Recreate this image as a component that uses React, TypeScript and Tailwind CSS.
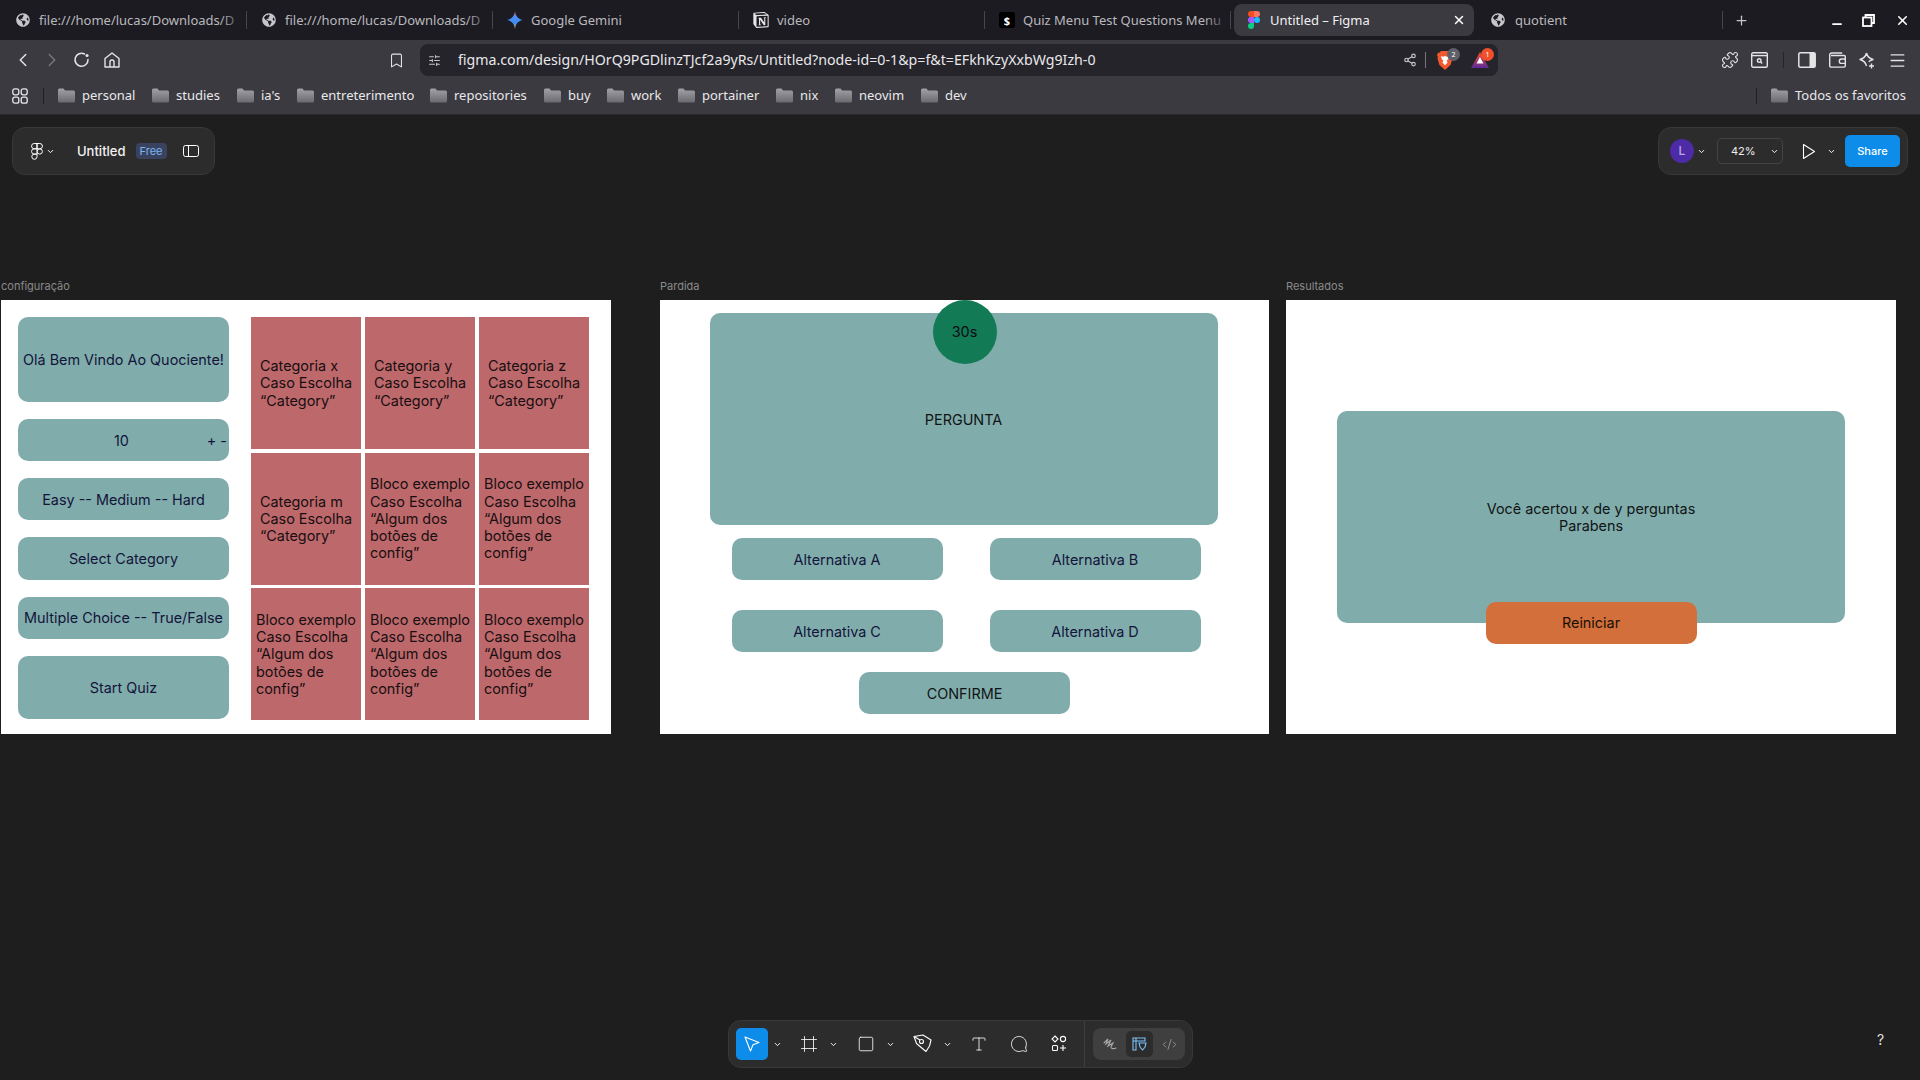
import React from 'react';
import {
  ChevronLeft,
  ChevronRight,
  Bookmark,
  SlidersHorizontal,
  Share2,
  Puzzle,
  Menu,
  Plus,
  X,
  Minus,
  ChevronDown,
  Frame,
  Square,
  Type,
  MessageCircle,
  Code2,
} from 'lucide-react';
import { FaGlobeAmericas } from 'react-icons/fa';
import { SiNotion } from 'react-icons/si';

const FONT_UI = "font-['Noto_Sans',sans-serif]";
const FONT_FIGMA = "font-['Inter',sans-serif]";

const FigmaColor = () => (
  <svg width="12" height="18" viewBox="0 0 12 18">
    <path d="M0 3a3 3 0 0 1 3-3h3v6H3a3 3 0 0 1-3-3z" fill="#f24e1e" />
    <path d="M6 0h3a3 3 0 0 1 0 6H6z" fill="#ff7262" />
    <path d="M0 9a3 3 0 0 1 3-3h3v6H3a3 3 0 0 1-3-3z" fill="#a259ff" />
    <circle cx="9" cy="9" r="3" fill="#1abcfe" />
    <path d="M0 15a3 3 0 0 1 3-3h3v3a3 3 0 0 1-6 0z" fill="#0acf83" />
  </svg>
);

const Gemini = () => (
  <svg width="16" height="18" viewBox="0 0 16 18">
    <defs>
      <linearGradient id="gem" x1="0" y1="0" x2="0" y2="1">
        <stop offset="0" stopColor="#ea5a35" />
        <stop offset="0.3" stopColor="#4f8df5" />
        <stop offset="0.7" stopColor="#3f8cf0" />
        <stop offset="1" stopColor="#f5c23a" />
      </linearGradient>
    </defs>
    <path d="M8 0c.5 5 3.6 8.4 8 9-4.4.6-7.5 4-8 9-.5-5-3.6-8.4-8-9 4.4-.6 7.5-4 8-9z" fill="url(#gem)" />
  </svg>
);

const Folder = () => (
  <svg width="17" height="15" viewBox="0 0 17 15">
    <defs>
      <linearGradient id="fld" x1="0" y1="0" x2="0" y2="1">
        <stop offset="0" stopColor="#a2a2a6" />
        <stop offset="1" stopColor="#6a6a6f" />
      </linearGradient>
    </defs>
    <path d="M0 2a1.5 1.5 0 0 1 1.5-1.5h4L7 2.5h8.5A1.5 1.5 0 0 1 17 4v9a1.5 1.5 0 0 1-1.5 1.5h-14A1.5 1.5 0 0 1 0 13z" fill="url(#fld)" />
  </svg>
);

const BraveLion = () => (
  <svg width="16" height="19" viewBox="0 0 16 19">
    <path d="M4 0h8l1.3 1.6 1.9.4.8 2.2-.9 1.6.5 1.2-2 6.8-3.4 3.2L8 19l-2.2-1.9-3.4-3.2-2-6.8.5-1.2L0 4.2.8 2l1.9-.4z" fill="#f1582b" />
    <path d="M4 5l2.2.8L8 5l1.8.8L12 5l-.8 3.2-1.6 1.2 1 2.2L8 14.2l-2.6-2.6 1-2.2-1.6-1.2z" fill="#fff" />
  </svg>
);

const RewardsTriangle = () => (
  <svg width="18" height="16" viewBox="0 0 18 16">
    <defs>
      <linearGradient id="rw" x1="0" y1="0" x2="0" y2="1">
        <stop offset="0" stopColor="#f1502b" />
        <stop offset="0.55" stopColor="#a23a6a" />
        <stop offset="1" stopColor="#5b2a9a" />
      </linearGradient>
    </defs>
    <path d="M9 0l9 16H0z" fill="url(#rw)" />
    <path d="M9 5l3.4 6.4H5.6z" fill="#fff" />
  </svg>
);

const FigmaMark = () => (
  <svg width="12" height="17" viewBox="0 0 12 17" fill="none" stroke="#fff" strokeWidth="1">
    <path d="M6 .5H3.2a2.6 2.6 0 0 0 0 5.3H6zM6 .5h2.8a2.6 2.6 0 0 1 0 5.3H6zM6 5.8H3.2a2.6 2.6 0 0 0 0 5.3H6zM6 11.1H3.2a2.6 2.6 0 1 0 2.8 2.6z" />
    <circle cx="8.8" cy="8.5" r="2.6" />
  </svg>
);

const Caret = ({ className = '' }: { className?: string }) => (
  <ChevronDown className={`w-[9px] h-[9px] text-white ${className}`} strokeWidth={2.5} />
);

const ReloadIcon = () => (
  <svg className="ml-[10px]" width="18" height="18" viewBox="0 0 18 18" fill="none" stroke="#e4e4e6" strokeWidth="1.5" strokeLinecap="round">
    <path d="M15 8.5A6.5 6.5 0 1 1 11.5 3" />
    <circle cx="14" cy="4.5" r="1.6" fill="#e4e4e6" stroke="none" />
  </svg>
);

const HomeIcon = () => (
  <svg className="ml-[12px]" width="18" height="18" viewBox="0 0 18 18" fill="none" stroke="#e4e4e6" strokeWidth="1.4" strokeLinejoin="round">
    <path d="M2 7.5L9 2l7 5.5V16H2z" />
    <path d="M7 16v-5a2 2 0 0 1 4 0v5" />
  </svg>
);

const AppsIcon = () => (
  <svg width="16" height="16" viewBox="0 0 16 16" fill="none" stroke="#e8e8ea" strokeWidth="1.3">
    <rect x="0.8" y="0.8" width="6" height="6" rx="2" />
    <rect x="9.2" y="0.8" width="6" height="6" rx="2" />
    <rect x="0.8" y="9.2" width="6" height="6" rx="2" />
    <rect x="9.2" y="9.2" width="6" height="6" rx="2" />
  </svg>
);

const tabs = [
  { label: 'file:///home/lucas/Downloads/D', icon: <FaGlobeAmericas className="w-[14px] h-[14px] text-[#c6c6ca]" /> },
  { label: 'file:///home/lucas/Downloads/D', icon: <FaGlobeAmericas className="w-[14px] h-[14px] text-[#c6c6ca]" /> },
  { label: 'Google Gemini', icon: <Gemini /> },
  { label: 'video', icon: <SiNotion className="w-[16px] h-[16px] text-[#e6e6e6]" /> },
  {
    label: 'Quiz Menu Test Questions Menu',
    icon: (
      <span className="w-[16px] h-[16px] rounded-[2px] bg-black text-white text-[11px] leading-none flex items-center justify-center font-bold">$</span>
    ),
  },
];

const bookmarks = [
  { label: 'personal', w: 'w-[94px]' },
  { label: 'studies', w: 'w-[85px]' },
  { label: 'ia\'s', w: 'w-[60px]' },
  { label: 'entreterimento', w: 'w-[133px]' },
  { label: 'repositories', w: 'w-[114px]' },
  { label: 'buy', w: 'w-[63px]' },
  { label: 'work', w: 'w-[71px]' },
  { label: 'portainer', w: 'w-[98px]' },
  { label: 'nix', w: 'w-[59px]' },
  { label: 'neovim', w: 'w-[86px]' },
  { label: 'dev', w: 'w-[60px]' },
];

const Tab = ({ label, icon }: { label: string; icon: React.ReactNode }) => (
  <div className="w-[246px] h-[32px] shrink-0 flex items-center pl-[14px] relative">
    <span className="w-[16px] flex justify-center shrink-0">{icon}</span>
    <span className="ml-[8px] mt-[1px] w-[198px] text-[13px] text-[#b9b9bd] whitespace-nowrap">{label}</span>
    <span className="absolute right-[1px] top-[4px] w-[26px] h-[24px] bg-gradient-to-r from-transparent to-[#1c1b22]" />
    <span className="absolute right-0 top-[7px] w-px h-[18px] bg-[#46454b]" />
  </div>
);

const TealBox = ({ className = '', children }: { className?: string; children?: React.ReactNode }) => (
  <div className={`bg-[#80adac] flex items-center justify-center text-[14.4px] text-[#14143a] ${className}`}>{children}</div>
);

const cellTexts = [
  'Categoria x\nCaso Escolha\n“Category”',
  'Categoria y\nCaso Escolha\n“Category”',
  'Categoria z\nCaso Escolha\n“Category”',
  'Categoria m\nCaso Escolha\n“Category”',
  ...Array(5).fill('Bloco exemplo\nCaso Escolha\n“Algum dos\nbotões de\nconfig”'),
];

const ConfigFrame = () => (
  <div className="w-[610px] h-[434px] bg-white flex pl-[17px] pt-[17px]">
    <div className="w-[211px] flex flex-col">
      <TealBox className="h-[85px] rounded-[10px] pt-[1px]">Olá Bem Vindo Ao Quociente!</TealBox>
      <div className="mt-[17px] h-[42px] rounded-[10px] bg-[#80adac] flex items-center justify-between pl-[96px] pr-[2px] pt-[1px] text-[14.4px] text-[#14143a]">
        <span>10</span>
        <span>+ -</span>
      </div>
      <TealBox className="mt-[17px] h-[42px] rounded-[10px] pt-[1px]">Easy -- Medium -- Hard</TealBox>
      <TealBox className="mt-[17px] h-[43px] rounded-[10px]">Select Category</TealBox>
      <TealBox className="mt-[17px] h-[42px] rounded-[10px]">Multiple Choice -- True/False</TealBox>
      <TealBox className="mt-[17px] h-[63px] rounded-[10px]">Start Quiz</TealBox>
    </div>
    <div className="ml-[22px] w-[338px] h-[403px] grid grid-cols-3 grid-rows-3 gap-x-[4px] gap-y-[3.5px]">
      {cellTexts.map((text, i) => (
        <div key={i} className="bg-[#bd686a] flex items-center justify-center">
          <span className="whitespace-pre text-left text-[14.4px] leading-[17.3px] text-[#180f12]">{text}</span>
        </div>
      ))}
    </div>
  </div>
);

const GameFrame = () => (
  <div className="w-[609px] h-[434px] bg-white relative flex flex-col items-center pt-[13px] pr-[2px]">
    <div className="absolute left-[272.5px] top-0 w-[64px] h-[64px] rounded-full bg-[#127a54] flex items-center justify-center text-[14.4px] text-[#0b0b14]">
      30s
    </div>
    <TealBox className="w-[508px] h-[212px] rounded-[10px] pt-[1px] text-[#111414] shrink-0">PERGUNTA</TealBox>
    <div className="mt-[13px] ml-[5px] grid grid-cols-2 gap-x-[47px] gap-y-[30px]">
      <TealBox className="w-[211px] h-[42px] rounded-[10px] pt-[1px]">Alternativa A</TealBox>
      <TealBox className="w-[211px] h-[42px] rounded-[10px] pt-[1px]">Alternativa B</TealBox>
      <TealBox className="w-[211px] h-[42px] rounded-[10px] pt-[1px]">Alternativa C</TealBox>
      <TealBox className="w-[211px] h-[42px] rounded-[10px] pt-[1px]">Alternativa D</TealBox>
    </div>
    <TealBox className="mt-[20px] ml-[2px] w-[211px] h-[42px] rounded-[10px] pt-[1px] text-[#111414]">CONFIRME</TealBox>
  </div>
);

const ResultFrame = () => (
  <div className="w-[610px] h-[434px] bg-white flex flex-col items-center pt-[111px]">
    <TealBox className="w-[508px] h-[212px] rounded-[10px] text-center leading-[17.3px] text-[#111414] shrink-0">
      Você acertou x de y perguntas
      <br />
      Parabens
    </TealBox>
    <div className="-mt-[21px] relative w-[211px] h-[42px] rounded-[10px] bg-[#d26f3a] flex items-center justify-center pb-[1px] text-[14.4px] text-[#1a0f08]">
      Reiniciar
    </div>
  </div>
);

export default function App() {
  return (
    <div className="w-[1920px] h-[1080px] overflow-hidden bg-[#1e1e1e] flex flex-col relative">
      {/* tab strip */}
      <div className={`h-[40px] bg-[#1c1b22] flex items-center pl-[1px] shrink-0 ${FONT_UI}`}>
        {tabs.map((t, i) => (
          <Tab key={i} label={t.label} icon={t.icon} />
        ))}
        <div className="w-[240px] h-[32px] ml-[3px] shrink-0 rounded-[8px] bg-[#3b3a41] flex items-center pl-[14px] relative">
          <FigmaColor />
          <span className="ml-[10px] mt-[1px] text-[13px] text-[#f0f0f2]">Untitled – Figma</span>
          <X className="absolute right-[8px] top-[9px] w-[14px] h-[14px] text-white" strokeWidth={2.5} />
        </div>
        <div className="w-[246px] h-[32px] ml-[3px] shrink-0 flex items-center pl-[14px] relative">
          <FaGlobeAmericas className="w-[14px] h-[14px] text-[#c6c6ca]" />
          <span className="ml-[10px] mt-[1px] text-[13px] text-[#b9b9bd]">quotient</span>
          <span className="absolute right-0 top-[7px] w-px h-[18px] bg-[#46454b]" />
        </div>
        <Plus className="ml-[11px] w-[15px] h-[15px] text-[#c6c6ca]" />
        <Minus className="ml-[81px] mt-[8px] w-[14px] h-[14px] text-white" strokeWidth={3} />
        <svg className="ml-[18px]" width="13" height="13" viewBox="0 0 13 13" fill="none" stroke="#fff" strokeWidth="1.8">
          <path d="M3.5 3V1h8.5v8H9.5" />
          <rect x="1" y="3.5" width="8.5" height="8.5" />
        </svg>
        <X className="ml-[20px] w-[15px] h-[15px] text-white" strokeWidth={2.5} />
      </div>

      {/* address bar */}
      <div className={`h-[40px] bg-[#3b3a41] flex items-center pl-[12px] shrink-0 ${FONT_UI}`}>
        <ChevronLeft className="w-[22px] h-[22px] text-[#e4e4e6]" strokeWidth={1.6} />
        <ChevronRight className="ml-[7px] w-[22px] h-[22px] text-[#77767c]" strokeWidth={1.6} />
        <ReloadIcon />
        <HomeIcon />
        <Bookmark className="ml-[267px] w-[17px] h-[19px] text-[#e4e4e6]" strokeWidth={1.5} />
        <div className="ml-[15px] w-[1078px] h-[32px] rounded-[8px] bg-[#25242a] flex items-center pl-[8px]">
          <SlidersHorizontal className="w-[13px] h-[13px] text-[#c6c6ca]" />
          <span className="ml-[17px] text-[14.2px] text-[#e8e8ea] whitespace-nowrap w-[945px]">
            figma.com/design/HOrQ9PGDlinzTJcf2a9yRs/Untitled?node-id=0-1&amp;p=f&amp;t=EFkhKzyXxbWg9Izh-0
          </span>
          <Share2 className="w-[14px] h-[14px] text-[#c6c6ca]" />
          <span className="ml-[8px] w-px h-[16px] bg-[#77767c]" />
          <div className="ml-[11px] relative">
            <BraveLion />
            <span className="absolute -right-[7px] -top-[3px] w-[13px] h-[13px] rounded-full bg-[#5f5f6a] text-[7px] leading-[13px] text-center text-white">2</span>
          </div>
          <div className="ml-[18px] relative">
            <RewardsTriangle />
            <span className="absolute -right-[5px] -top-[4px] w-[13px] h-[13px] rounded-full bg-[#f1502b] text-[7px] leading-[13px] text-center text-white">1</span>
          </div>
        </div>
        <Puzzle className="ml-[223px] w-[18px] h-[18px] text-[#e4e4e6]" strokeWidth={1.5} />
        <svg className="ml-[12px]" width="17" height="16" viewBox="0 0 17 16" fill="none" stroke="#e4e4e6" strokeWidth="1.4">
          <rect x="0.7" y="0.7" width="15.6" height="14.6" rx="1.5" />
          <path d="M1 3.6h15" />
          <circle cx="8.2" cy="8.6" r="1.8" />
          <path d="M9.6 10l1.6 1.6" />
        </svg>
        <span className="ml-[15px] w-px h-[16px] bg-[#25242a]" />
        <svg className="ml-[14px]" width="18" height="16" viewBox="0 0 18 16">
          <rect x="0.8" y="0.8" width="16.4" height="14.4" rx="1.5" fill="none" stroke="#e4e4e6" strokeWidth="1.5" />
          <rect x="11.5" y="1" width="5.5" height="14" fill="#e4e4e6" />
        </svg>
        <svg className="ml-[13px]" width="17" height="16" viewBox="0 0 17 16" fill="none" stroke="#e4e4e6" strokeWidth="1.4">
          <path d="M2 3.5h13a1.3 1.3 0 0 1 1.3 1.3v9a1.3 1.3 0 0 1-1.3 1.3H2A1.3 1.3 0 0 1 .7 13.800V3a2 2 0 0 1 2-2h10.500" />
          <path d="M16 7h-3.500a2.200 2.200 0 0 0 0 4.400H16" />
        </svg>
        <svg className="ml-[13px]" width="17" height="17" viewBox="0 0 17 17" fill="none" stroke="#e4e4e6" strokeWidth="1.4" strokeLinejoin="round">
          <path d="M7.500 1c.8 3.500 2.700 5.400 6.500 6.500-2.200.7-3.400 1.300-4.300 2.300M7.500 1C6.700 4.500 4.800 6.400 1 7.500c3.800 1.100 5.700 3 6.500 6.500" />
          <path d="M12.500 11.500v5M10 14h5" />
        </svg>
        <Menu className="ml-[12px] w-[19px] h-[19px] text-[#e4e4e6]" strokeWidth={1.6} />
      </div>

      {/* bookmarks */}
      <div className={`h-[35px] bg-[#3b3a41] flex items-center pl-[12px] pb-[3px] border-b border-[#2a2a2e] shrink-0 ${FONT_UI}`}>
        <AppsIcon />
        <span className="ml-[15px] w-px h-[16px] bg-[#1f1f23]" />
        <div className="ml-[14px] flex items-center">
          {bookmarks.map((b) => (
            <div key={b.label} className={`flex items-center shrink-0 ${b.w}`}>
              <Folder />
              <span className="ml-[7px] text-[13px] text-[#e8e8ea] whitespace-nowrap">{b.label}</span>
            </div>
          ))}
        </div>
        <span className="ml-[775px] w-px h-[16px] bg-[#1f1f23]" />
        <span className="ml-[14px]"><Folder /></span>
        <span className="ml-[7px] text-[13px] text-[#e8e8ea] whitespace-nowrap">Todos os favoritos</span>
      </div>

      {/* figma canvas */}
      <div className={`flex-1 flex flex-col ${FONT_FIGMA}`}>
        <div className="mt-[12px] px-[12px] flex justify-between h-[48px]">
          <div className="w-[203px] rounded-[13px] bg-[#2c2c2c] flex items-center pl-[18px] border border-[#383838]">
            <FigmaMark />
            <Caret className="ml-[3px]" />
            <span className="ml-[22px] mt-[1px] text-[13px] font-medium text-[#f2f2f2]">Untitled</span>
            <span className="ml-[10px] w-[31px] h-[16px] rounded-[4px] bg-[#394360] text-[11px] leading-[16px] text-center text-[#7cb5f0]">Free</span>
            <PanelIcon />
          </div>
          <div className="w-[250px] rounded-[13px] bg-[#2c2c2c] flex items-center pl-[11px] border border-[#383838]">
            <span className="w-[24px] h-[24px] rounded-full bg-[#4d2aa6] text-[12px] font-medium leading-[24px] text-center text-[#b9a8e6]">L</span>
            <Caret className="ml-[3px]" />
            <div className="ml-[11px] w-[66px] h-[26px] rounded-[5px] border border-[#444] flex items-center pl-[13px]">
              <span className="text-[11px] text-[#eee] w-[39px]">42%</span>
              <Caret />
            </div>
            <svg className="ml-[19px]" width="14" height="17" viewBox="0 0 14 17" fill="none" stroke="#fff" strokeWidth="1.1" strokeLinejoin="round">
              <path d="M1.500 1.500L12.500 8.500L1.500 15.500z" />
            </svg>
            <Caret className="ml-[11px]" />
            <span className="ml-[9px] w-[55px] h-[32px] rounded-[5px] bg-[#0d8ce9] text-[11px] font-medium leading-[32px] text-center text-white">Share</span>
          </div>
        </div>

        <div className="mt-[105px] pl-[1px] flex">
          <div className="w-[610px]">
            <p className="h-[20px] text-[11px] leading-[13px] text-[#8a8a8a]">configuração</p>
            <ConfigFrame />
          </div>
          <div className="ml-[49px] w-[609px]">
            <p className="h-[20px] text-[11px] leading-[13px] text-[#8a8a8a]">Pardida</p>
            <GameFrame />
          </div>
          <div className="ml-[17px] w-[610px]">
            <p className="h-[20px] text-[11px] leading-[13px] text-[#8a8a8a]">Resultados</p>
            <ResultFrame />
          </div>
        </div>

        <div className="mt-[286px] pl-[728px] flex">
          <div className="w-[465px] h-[48px] rounded-[13px] bg-[#2c2c2c] border border-[#383838] flex items-center pl-[7px]">
            <span className="w-[32px] h-[32px] rounded-[5px] bg-[#0d8ce9] flex items-center justify-center">
              <svg width="18" height="18" viewBox="0 0 18 18" fill="none" stroke="#fff" strokeWidth="1.1" strokeLinejoin="round">
                <path d="M2 2l14 5.500-6 2.200L7.500 16z" />
              </svg>
            </span>
            <Caret className="ml-[5px]" />
            <Frame className="ml-[18px] w-[18px] h-[18px] text-white" strokeWidth={1.1} />
            <Caret className="ml-[11px]" />
            <Square className="ml-[19px] w-[18px] h-[18px] text-white" strokeWidth={1.1} />
            <Caret className="ml-[11px]" />
            <svg className="ml-[18px]" width="20" height="20" viewBox="0 0 20 20" fill="none" stroke="#fff" strokeWidth="1.1" strokeLinejoin="round">
              <path d="M1 2.500L10 1l8 5-1.500 6L13 17.500 10 15 3.500 9.500z" />
              <circle cx="8.500" cy="7.500" r="2" />
              <path d="M1 2.500l6 3.500" />
            </svg>
            <Caret className="ml-[10px]" />
            <Type className="ml-[18px] w-[18px] h-[18px] text-white" strokeWidth={1.1} />
            <MessageCircle className="ml-[22px] w-[18px] h-[18px] text-white -scale-x-100" strokeWidth={1.1} />
            <svg className="ml-[22px]" width="18" height="18" viewBox="0 0 18 18" fill="none" stroke="#fff" strokeWidth="1.1">
              <path d="M5 1l3 3-3 3-3-3z" />
              <circle cx="13" cy="4" r="2.600" />
              <rect x="2.500" y="10.500" width="5" height="5" rx="1" />
              <path d="M13 10v6M10 13h6" />
            </svg>
            <span className="ml-[16px] w-px h-[46px] bg-[#3e3e3e]" />
            <div className="ml-[8px] w-[92px] h-[32px] rounded-[8px] bg-[#3f3f3f] flex items-center">
              <span className="w-[33px] flex justify-center">
                <svg width="14" height="14" viewBox="0 0 14 14" fill="none" stroke="#a8a8a8" strokeWidth="1.100" strokeLinecap="round">
                  <path d="M1 6l4-4-2 5 5-4-3 6 5-3-2 4c0 2 3 2 5 1" />
                </svg>
              </span>
              <span className="w-[27px] h-[26px] rounded-[5px] bg-[#2c2c2c] flex items-center justify-center">
                <svg width="15" height="15" viewBox="0 0 15 15" fill="none" stroke="#7cc4fa" strokeWidth="1.100">
                  <path d="M1 1h12v3H4v9H1zM1 4h3M4 1v3M7 6h7l-1 4-2.500 3L8 10z" />
                </svg>
              </span>
              <span className="w-[32px] flex justify-center">
                <Code2 className="w-[15px] h-[15px] text-[#a8a8a8]" strokeWidth={1.2} />
              </span>
            </div>
          </div>
        </div>
      </div>

      {/* help button */}
      <span className="absolute left-[1877px] top-[1029px] text-[14px] text-[#e0e0e0] font-['Inter',sans-serif]">?</span>
    </div>
  );
}

function PanelIcon() {
  return (
    <svg className="ml-[16px]" width="16" height="12" viewBox="0 0 16 12" fill="none" stroke="#fff" strokeWidth="1">
      <rect x="0.5" y="0.5" width="15" height="11" rx="2" />
      <path d="M5.5 0.5v11" />
    </svg>
  );
}
